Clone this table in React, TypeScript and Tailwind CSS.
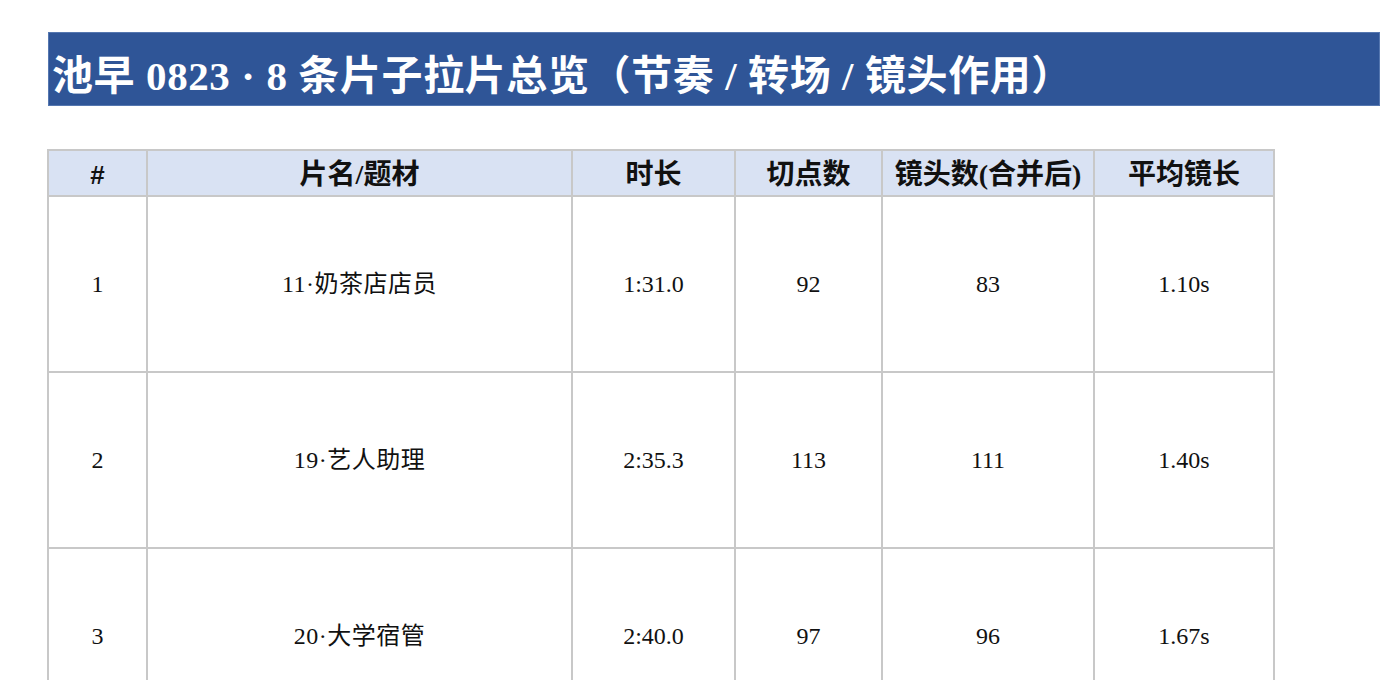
import React from "react";

const rows = [
  { no: 1, title: "11·奶茶店店员", dur: "1:31.0", cuts: 92, shots: 83, avg: "1.10s" },
  { no: 2, title: "19·艺人助理", dur: "2:35.3", cuts: 113, shots: 111, avg: "1.40s" },
  { no: 3, title: "20·大学宿管", dur: "2:40.0", cuts: 97, shots: 96, avg: "1.67s" },
];

const headers = ["#", "片名/题材", "时长", "切点数", "镜头数(合并后)", "平均镜长"];
const widths = ["w-[99px]", "w-[425px]", "w-[163px]", "w-[147px]", "w-[212px]", "w-[180px]"];

const serif = "font-['Liberation_Serif','Noto_Sans_CJK_SC',serif]";

export default function App() {
  return (
    <div className={`min-h-[680px] bg-white pt-[32px] pl-[48px] text-[#111] ${serif}`}>
      <div className="h-[74px] bg-[#2f5597] border border-[#5577b0] flex items-center pl-[3px] pt-[14px]">
        <h1 className="text-white text-[41px] font-bold leading-none tracking-[0.6px]">
          池早 0823 · 8 条片子拉片总览（节奏 / 转场 / 镜头作用）
        </h1>
      </div>

      <table className="mt-[43px] -ml-px table-fixed border-collapse w-[1226px]">
        <thead>
          <tr className="h-[46px] bg-[#d9e2f3]">
            {headers.map((h, i) => (
              <th
                key={h}
                className={`${widths[i]} border-2 border-[#c8c8c8] text-center font-bold leading-none pt-[3px] ${i === 0 ? "text-[26px] font-['Liberation_Sans',sans-serif]" : "text-[28px]"}`}
              >
                {h}
              </th>
            ))}
          </tr>
        </thead>
        <tbody>
          {rows.map((r) => (
            <tr key={r.no} className="h-[176px] text-[24px] text-center">
              <td className="border-2 border-[#c8c8c8]">{r.no}</td>
              <td className="border-2 border-[#c8c8c8] tracking-[0.5px]">{r.title}</td>
              <td className="border-2 border-[#c8c8c8]">{r.dur}</td>
              <td className="border-2 border-[#c8c8c8]">{r.cuts}</td>
              <td className="border-2 border-[#c8c8c8]">{r.shots}</td>
              <td className="border-2 border-[#c8c8c8]">{r.avg}</td>
            </tr>
          ))}
        </tbody>
      </table>
    </div>
  );
}
